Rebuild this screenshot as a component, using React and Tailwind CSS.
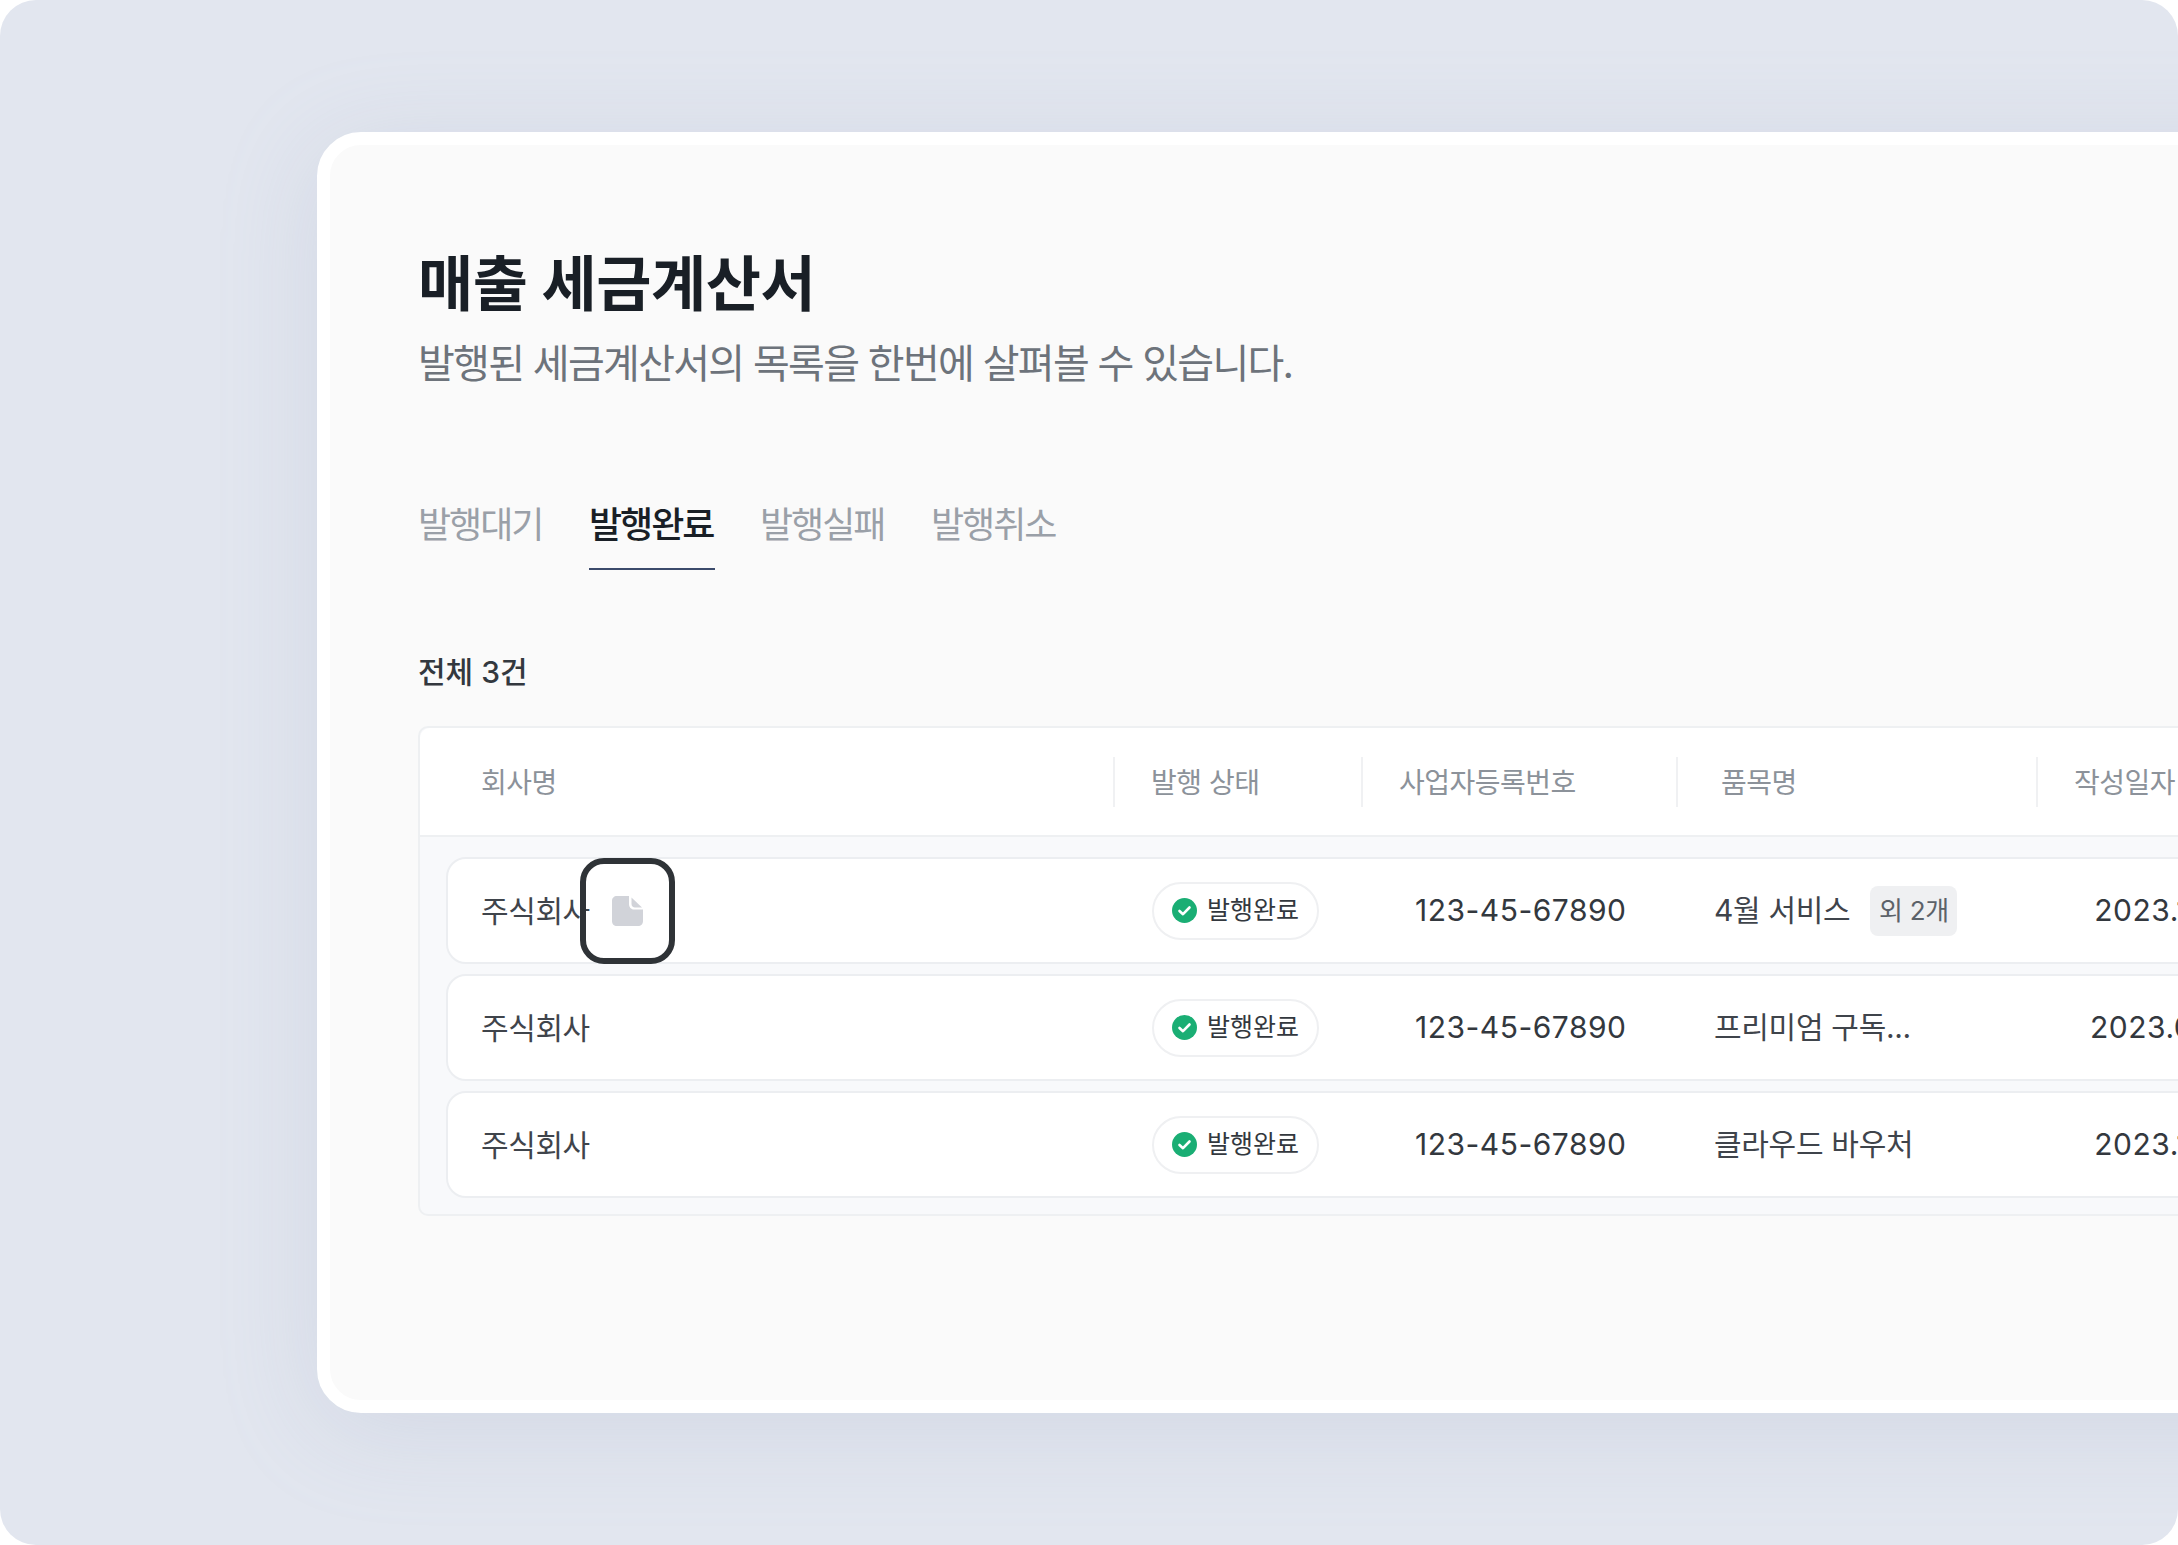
import React from 'react';

const rows = [
    { name: '주식회사', item: '4월 서비스', extra: '외 2개', date: '2023.11.12' },
    { name: '주식회사', item: '프리미엄 구독...', date: '2023.01.12' },
    { name: '주식회사', item: '클라우드 바우처', date: '2023.11.12' },
];

const tabs = ['발행대기', '발행완료', '발행실패', '발행취소'];

const headers = [
    { label: '회사명', width: 'w-[693px]', pad: 'pl-[61px]' },
    { label: '발행 상태', width: 'w-[248px]', pad: 'pl-[36px]' },
    { label: '사업자등록번호', width: 'w-[315px]', pad: 'pl-[36px]' },
    { label: '품목명', width: 'w-[360px]', pad: 'pl-[43px]' },
    { label: '작성일자', width: 'w-[300px]', pad: 'pl-[36px]' },
];

const FileIcon = () => (
    <svg width="31" height="30" viewBox="0 0 31 30" fill="#d1d3d9">
        <path d="M5 0H17V8C17 11 19 13.500 22 13.500H31V25C31 28 29 30 26 30H5C2 30 0 28 0 25V5C0 2 2 0 5 0Z" />
        <path d="M19.500 1.500L30 11.500H23C21 11.500 19.500 10 19.500 8Z" />
    </svg>
);

const CheckIcon = () => (
    <svg width="25" height="25" viewBox="0 0 25 25">
        <circle cx="12.5" cy="12.5" r="12.500" fill="#1aae74" />
        <path d="M7.500 13L11 16.200L17.500 9.500" fill="none" stroke="#fff" strokeWidth="2.600" strokeLinecap="round" strokeLinejoin="round" />
    </svg>
);

const Row = ({ row }) => (
    <div className="flex items-center h-[107px] w-[1900px] bg-white rounded-[20px] border-2 border-[#eceef1]">
        <div className="w-[704px] shrink-0 pl-[33px] text-[30px] leading-none tracking-[-0.4px] text-[#3f444b]">{row.name}</div>
        <div className="w-[263px] shrink-0">
            <div className="flex items-center w-[167px] h-[58px] pl-[18px] gap-[10px] rounded-full border-2 border-[#eff0f2] text-[25px] tracking-[0px] text-[#33383e]">
                <CheckIcon />
                발행완료
            </div>
        </div>
        <div className="w-[299px] shrink-0 text-[30px] tracking-[0.5px] text-[#33383e]">123-45-67890</div>
        <div className="w-[353px] shrink-0 flex items-center text-[30px] tracking-[-0.3px] text-[#3f444b]">
            {row.item}
            {row.extra && (
                <span className="ml-[20px] h-[50px] w-[87px] flex items-center justify-center rounded-[8px] bg-[#eff0f2] text-[26px] tracking-[-0.3px] text-[#5c6269]">
                    {row.extra}
                </span>
            )}
        </div>
        <div className="w-[200px] shrink-0 text-center whitespace-nowrap text-[30px] tracking-[0.5px] text-[#33383e]">{row.date}</div>
    </div>
);

export default function App() {
    return (
        <div className="relative w-[2178px] h-[1545px] overflow-hidden bg-white font-['Inter','Noto_Sans_CJK_KR',sans-serif]">
            <div className="w-full h-full rounded-[36px] bg-[#e2e6ef] pt-[132px] pl-[317px] overflow-hidden">
                <div className="w-[2100px] h-[1281px] rounded-[44px] border-[13px] border-white bg-[#fafafa] shadow-[0_16px_100px_rgba(150,160,190,0.2)] pl-[88px] pt-[107px]">
                    <h1 className="text-[60px] leading-[64px] font-bold tracking-[-0.4px] text-[#191f26]">매출 세금계산서</h1>
                    <p className="mt-[24px] text-[40px] leading-[48px] tracking-[-1.7px] text-[#6d737b]">발행된 세금계산서의 목록을 한번에 살펴볼 수 있습니다.</p>

                    <div className="flex gap-[46.5px] mt-[112px]">
                        {tabs.map((tab, i) => (
                            <div
                                key={tab}
                                className={`h-[70px] pt-[3px] text-[36px] leading-[44px] tracking-[-2px] border-b-2 ${i === 1 ? 'font-medium text-[#191f26] border-[#3b4a6b] pr-[2px] mr-[-2px]' : 'text-[#9aa0a8] border-transparent'}`}
                            >
                                {tab}
                            </div>
                        ))}
                    </div>

                    <div className="mt-[84px] text-[30px] leading-[36px] font-medium tracking-[0px] text-[#33383e]">전체 3건</div>

                    <div className="mt-[36px] w-[1960px] h-[490px] rounded-[10px] border-2 border-[#eef0f2] bg-[#f8f9fb]">
                        <div className="flex items-center h-[109px] bg-white border-b-2 border-[#eef0f2] rounded-t-[10px]">
                            {headers.map((h, i) => (
                                <div key={h.label} className={`${h.width} ${h.pad} h-[50px] pt-[3px] flex items-center shrink-0 text-[28px] tracking-[-0.5px] text-[#8c929a] ${i > 0 ? 'border-l-2 border-[#f0f1f3]' : ''}`}>
                                    {h.label}
                                </div>
                            ))}
                        </div>
                        <div className="flex flex-col gap-[10px] pt-[20px] pl-[26px]">
                            {rows.map((row, i) => (
                                <Row key={i} row={row} />
                            ))}
                        </div>
                    </div>
                </div>
            </div>

            {/* focus box over the file icon */}
            <div className="absolute left-[580px] top-[858px] w-[95px] h-[106px] rounded-[24px] border-[6px] border-[#2f3337] flex items-center justify-center">
                <FileIcon />
            </div>
        </div>
    );
}
